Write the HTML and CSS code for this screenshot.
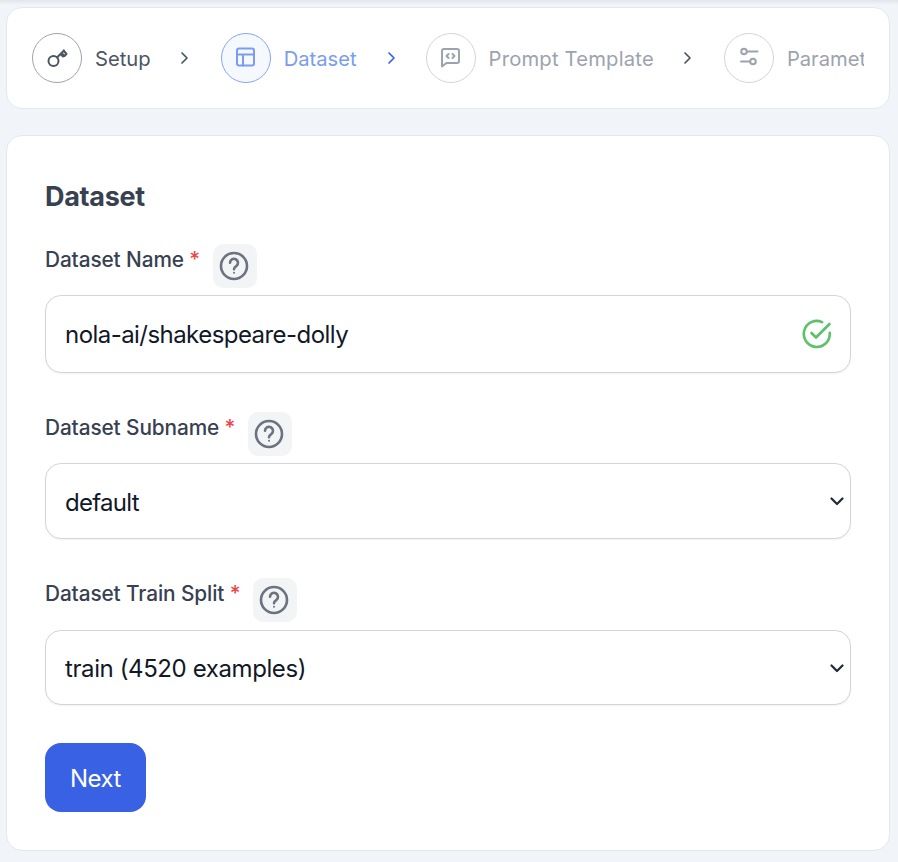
FILE: index.html
```html
<!DOCTYPE html>
<html lang="en">
<head>
<meta charset="utf-8">
<title>Dataset</title>
<link rel="stylesheet" href="styles.css">
</head>
<body>
<div class="topshade"></div>
<main class="page">
  <nav class="stepper card">
    <div class="steps">
      <div class="step done">
        <span class="circle"><svg viewBox="0 0 24 24" class="ico"><circle cx="8.500" cy="15" r="5"/><path d="M12 11.500 19 4.500M15.500 8l2.500 2.500M16.500 7l3 3 2-2-3-3.500"/></svg></span>
        <span class="step-label">Setup</span>
      </div>
      <svg class="chev chev-dark chev-a" viewBox="0 0 10 14"><path d="M2 2l5 5-5 5"/></svg>
      <div class="step active">
        <span class="circle"><svg viewBox="0 0 24 24" class="ico"><rect x="3" y="2.500" width="17" height="17" rx="2"/><path d="M3 8.500h17M9 8.500v11"/></svg></span>
        <span class="step-label">Dataset</span>
      </div>
      <svg class="chev chev-blue chev-b" viewBox="0 0 10 14"><path d="M2 2l5 5-5 5"/></svg>
      <div class="step todo">
        <span class="circle"><svg viewBox="0 0 24 24" class="ico"><path d="M5 3h13a2 2 0 0 1 2 2v10a2 2 0 0 1-2 2H7.500L3 20.500V5a2 2 0 0 1 2-2z"/><path d="M9.500 8 7.500 10l2 2M13.500 8l2 2-2 2"/></svg></span>
        <span class="step-label label-long">Prompt Template</span>
      </div>
      <svg class="chev chev-dark chev-c" viewBox="0 0 10 14"><path d="M2 2l5 5-5 5"/></svg>
      <div class="step todo">
        <span class="circle"><svg viewBox="0 0 24 24" class="ico"><circle cx="7" cy="5.500" r="2.800"/><circle cx="16" cy="15.500" r="2.800"/><path d="M10 5.500h10.500M4 15.500H13"/></svg></span>
        <span class="step-label">Parameters</span>
      </div>
    </div>
  </nav>

  <section class="form card">
    <h2 class="title">Dataset</h2>

    <div class="field field-name">
      <div class="label-row">
        <label class="label" for="name">Dataset Name <span class="req">*</span></label>
        <span class="help"><svg viewBox="0 0 30 30"><circle cx="15" cy="15" r="13"/><path d="M11 11.800a4 4 0 1 1 6.400 3.200c-1.300.9-2.400 1.600-2.400 3.200"/><circle class="dot" cx="15" cy="21.700" r="1"/></svg></span>
      </div>
      <div class="control">
        <input id="name" class="input input-name" value="nola-ai/shakespeare-dolly">
        <svg class="ok" viewBox="0 0 30 30"><path d="M27.800 13.800v1.200a13 13 0 1 1-7.700-11.900"/><path d="M9.500 14l4.500 4.500L27.500 5"/></svg>
      </div>
    </div>

    <div class="field field-sub">
      <div class="label-row">
        <label class="label" for="sub">Dataset Subname <span class="req">*</span></label>
        <span class="help"><svg viewBox="0 0 30 30"><circle cx="15" cy="15" r="13"/><path d="M11 11.800a4 4 0 1 1 6.400 3.200c-1.300.9-2.400 1.600-2.400 3.200"/><circle class="dot" cx="15" cy="21.700" r="1"/></svg></span>
      </div>
      <div class="control">
        <select id="sub" class="input select"><option>default</option></select>
        <svg class="caret" viewBox="0 0 14 9"><path d="M1.500 1.500 7 7l5.500-5.500"/></svg>
      </div>
    </div>

    <div class="field field-split">
      <div class="label-row">
        <label class="label" for="split">Dataset Train Split <span class="req">*</span></label>
        <span class="help"><svg viewBox="0 0 30 30"><circle cx="15" cy="15" r="13"/><path d="M11 11.800a4 4 0 1 1 6.400 3.200c-1.300.9-2.400 1.600-2.400 3.200"/><circle class="dot" cx="15" cy="21.700" r="1"/></svg></span>
      </div>
      <div class="control">
        <select id="split" class="input select select-split"><option>train (4520 examples)</option></select>
        <svg class="caret" viewBox="0 0 14 9"><path d="M1.500 1.500 7 7l5.500-5.500"/></svg>
      </div>
    </div>

    <button class="next" type="button">Next</button>
  </section>
</main>
</body>
</html>
```

FILE: styles.css
```css
* { box-sizing: border-box; }
html, body { margin: 0; height: 100%; }
body {
  background: #f1f5f9;
  font-family: Inter, "Liberation Sans", sans-serif;
  color: #374151;
  overflow: hidden;
  position: relative;
}
.topshade {
  position: absolute;
  inset: 0 0 auto 0;
  height: 5px;
  background: linear-gradient(#e2e6ea, #f1f5f9);
}
.page {
  position: relative;
  padding: 7px 8px 0 6px;
  display: flex;
  flex-direction: column;
  gap: 26px;
}
.card {
  background: #fff;
  border: 1px solid #e5e7eb;
  border-radius: 16px;
}
.stepper {
  height: 102px;
  padding: 0 25px;
  display: flex;
  align-items: center;
}
.steps {
  display: flex;
  align-items: center;
  width: 100%;
  overflow: hidden;
  white-space: nowrap;
}
.step {
  display: flex;
  align-items: center;
  gap: 13px;
  flex: none;
}
.circle {
  width: 50px;
  height: 50px;
  border-radius: 50%;
  border: 1px solid #9ca3af;
  display: flex;
  align-items: center;
  justify-content: center;
  flex: none;
}
.ico {
  width: 24px;
  height: 24px;
  fill: none;
  stroke: currentColor;
  stroke-width: 2;
  stroke-linecap: round;
  stroke-linejoin: round;
}
.step-label {
  font-size: 20.200px;
}
.label-long { letter-spacing: 0.2px; }
.done { color: #4b5563; }
.active { color: #7c9cf0; }
.active .circle {
  border-color: #86a5f5;
  background: #f5f8ff;
}
.todo { color: #9ca3af; }
.todo .circle { border-color: #d1d5db; }
.chev {
  width: 10px;
  height: 14px;
  flex: none;
  fill: none;
  stroke-width: 1.700;
  stroke-linecap: round;
  stroke-linejoin: round;
}
.chev-dark { stroke: #4b5563; }
.chev-blue { stroke: #3563e9; }
.chev-a { margin: 0 31px 0 29px; }
.chev-b { margin: 0 29px 0 30px; }
.chev-c { margin: 0 31px 0 29px; }

.form {
  height: 716px;
  padding: 45px 38px 0 38px;
}
.title {
  margin: 0;
  font-size: 27px;
  line-height: 32px;
  font-weight: 700;
  letter-spacing: -0.3px;
  color: #374151;
}
.field-name { margin-top: 31px; }
.field-sub { margin-top: 39px; }
.field-split { margin-top: 39px; }
.label-row {
  display: flex;
  align-items: flex-start;
  height: 44px;
}
.label {
  font-size: 20.800px;
  line-height: 32px;
  font-weight: 500;
  letter-spacing: -0.1px;
  color: #374151;
}
.req { color: #ef4444; }
.help {
  margin-left: 12.500px;
  width: 44px;
  height: 44px;
  border-radius: 10px;
  background: #f3f4f6;
  display: flex;
  align-items: center;
  justify-content: center;
}
.help svg {
  width: 30px;
  height: 30px;
  margin: -1px 1px 0 0;
  fill: none;
  stroke: #6b7280;
  stroke-width: 2.600;
  stroke-linecap: round;
}
.help .dot { fill: #6b7280; stroke: none; }
.control {
  position: relative;
  margin-top: 7px;
}
.input {
  display: block;
  width: 100%;
  height: 78px;
  border: 1px solid #d1d5db;
  border-radius: 16px;
  background: #fff;
  padding: 0 19px;
  font: 400 24px Inter, "Liberation Sans", sans-serif;
  letter-spacing: -0.7px;
  color: #111827;
  box-shadow: 0 1px 2px rgba(0, 0, 0, 0.05);
  outline: none;
}
.input-name { letter-spacing: -0.55px; }
.select {
  height: 76px;
  padding-top: 2px;
  appearance: none;
  -webkit-appearance: none;
}
.select-split {
  height: 75px;
  letter-spacing: -0.4px;
}
.field-split .control { margin-top: 8px; }
.ok {
  position: absolute;
  right: 19px;
  top: 24px;
  width: 30px;
  height: 30px;
  fill: none;
  stroke: #5cc269;
  stroke-width: 2.600;
  stroke-linecap: round;
  stroke-linejoin: round;
}
.caret {
  position: absolute;
  right: 7px;
  top: 34px;
  width: 14px;
  height: 9px;
  fill: none;
  stroke: #1f2937;
  stroke-width: 2.200;
  stroke-linecap: round;
  stroke-linejoin: round;
  pointer-events: none;
}
.next {
  display: block;
  margin-top: 38px;
  padding-top: 2px;
  width: 101px;
  height: 69px;
  border: 0;
  border-radius: 16px;
  background: #3861e3;
  color: #fff;
  font: 400 24px Inter, "Liberation Sans", sans-serif;
  letter-spacing: -0.5px;
}
```
